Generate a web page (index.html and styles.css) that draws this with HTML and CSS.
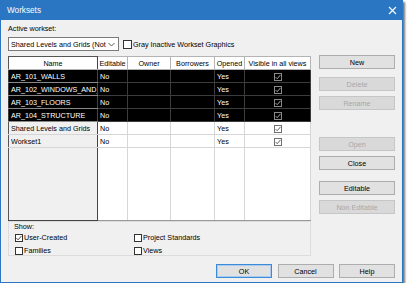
FILE: index.html
```html
<!DOCTYPE html>
<html>
<head>
<meta charset="utf-8">
<link rel="stylesheet" href="styles.css">
</head>
<body>
<div class="window">
  <div class="titlebar">
    <span class="title">Worksets</span>
    <svg class="close" width="9" height="9" viewBox="0 0 9 9"><path d="M1 1L8 8M8 1L1 8" stroke="#fff" stroke-width="1.1"/></svg>
  </div>
  <div class="body">
    <div class="label">Active workset:</div>
    <div class="toprow">
      <div class="select">
        <span class="select-text">Shared Levels and Grids (Not Editable)</span>
        <svg class="chev" width="7" height="5" viewBox="0 0 7 5"><path d="M0.5 1L3.5 4L6.5 1" fill="none" stroke="#444" stroke-width="0.9"/></svg>
      </div>
      <div class="check inline"><span class="box"></span><span>Gray Inactive Workset Graphics</span></div>
    </div>
    <div class="main">
      <div class="left">
        <table class="grid">
          <colgroup>
            <col class="c-name"><col class="c-edit"><col class="c-owner"><col class="c-borr"><col class="c-open"><col>
          </colgroup>
          <thead>
            <tr><th class="name">Name</th><th>Editable</th><th>Owner</th><th>Borrowers</th><th>Opened</th><th>Visible in all views</th></tr>
          </thead>
          <tbody>
            <tr class="sel"><td class="name"><span class="clip">AR_101_WALLS</span></td><td>No</td><td></td><td></td><td>Yes</td><td class="vis"><svg class="gchk" width="8" height="8" viewBox="0 0 8 8"><rect x="0.5" y="0.5" width="7" height="7" fill="none" stroke="#8a8a8a"/><path d="M1.6 4.1L3.2 5.7L6.5 1.9" fill="none" stroke="#b8b8b8" stroke-width="0.9"/></svg></td></tr>
            <tr class="sel"><td class="name"><span class="clip">AR_102_WINDOWS_AND_DOORS</span></td><td>No</td><td></td><td></td><td>Yes</td><td class="vis"><svg class="gchk" width="8" height="8" viewBox="0 0 8 8"><rect x="0.5" y="0.5" width="7" height="7" fill="none" stroke="#8a8a8a"/><path d="M1.6 4.1L3.2 5.7L6.5 1.9" fill="none" stroke="#b8b8b8" stroke-width="0.9"/></svg></td></tr>
            <tr class="sel"><td class="name"><span class="clip">AR_103_FLOORS</span></td><td>No</td><td></td><td></td><td>Yes</td><td class="vis"><svg class="gchk" width="8" height="8" viewBox="0 0 8 8"><rect x="0.5" y="0.5" width="7" height="7" fill="none" stroke="#8a8a8a"/><path d="M1.6 4.1L3.2 5.7L6.5 1.9" fill="none" stroke="#b8b8b8" stroke-width="0.9"/></svg></td></tr>
            <tr class="sel"><td class="name"><span class="clip">AR_104_STRUCTURE</span></td><td>No</td><td></td><td></td><td>Yes</td><td class="vis"><svg class="gchk" width="8" height="8" viewBox="0 0 8 8"><rect x="0.5" y="0.5" width="7" height="7" fill="none" stroke="#8a8a8a"/><path d="M1.6 4.1L3.2 5.7L6.5 1.9" fill="none" stroke="#b8b8b8" stroke-width="0.9"/></svg></td></tr>
            <tr><td class="name"><span class="clip">Shared Levels and Grids</span></td><td>No</td><td></td><td></td><td>Yes</td><td class="vis"><svg class="gchk" width="8" height="8" viewBox="0 0 8 8"><rect x="0.5" y="0.5" width="7" height="7" fill="#fff" stroke="#707070"/><path d="M1.6 4.1L3.2 5.7L6.5 1.9" fill="none" stroke="#505050" stroke-width="0.9"/></svg></td></tr>
            <tr><td class="name"><span class="clip">Workset1</span></td><td>No</td><td></td><td></td><td>Yes</td><td class="vis"><svg class="gchk" width="8" height="8" viewBox="0 0 8 8"><rect x="0.5" y="0.5" width="7" height="7" fill="#fff" stroke="#707070"/><path d="M1.6 4.1L3.2 5.7L6.5 1.9" fill="none" stroke="#505050" stroke-width="0.9"/></svg></td></tr>
            <tr class="filler"><td class="name"></td><td></td><td></td><td></td><td></td><td></td></tr>
          </tbody>
        </table>
      </div>
      <div class="side">
        <div class="btn">New</div>
        <div class="btn dis g8">Delete</div>
        <div class="btn dis g5">Rename</div>
        <div class="btn dis g27">Open</div>
        <div class="btn g5">Close</div>
        <div class="btn g11">Editable</div>
        <div class="btn dis g5">Non Editable</div>
      </div>
    </div>
    <div class="show">
      <div class="show-label">Show:</div>
      <div class="show-grid">
        <div class="check"><span class="box on"><svg width="8" height="8" viewBox="0 0 8 8"><path d="M1.4 4.1L3.1 5.8L6.6 1.8" fill="none" stroke="#333" stroke-width="0.9"/></svg></span><span>User-Created</span></div>
        <div class="check"><span class="box"></span><span>Project Standards</span></div>
        <div class="check"><span class="box"></span><span>Families</span></div>
        <div class="check"><span class="box"></span><span>Views</span></div>
      </div>
    </div>
    <div class="footer">
      <div class="btn def">OK</div>
      <div class="btn">Cancel</div>
      <div class="btn">Help</div>
    </div>
  </div>
</div>
</body>
</html>
```

FILE: styles.css
```css
html, body {
  margin: 0;
  padding: 0;
  background: #ffffff;
}

body {
  font-family: "Liberation Sans", Arial, sans-serif;
  font-size: 7.2px;
  color: #000;
}

.window {
  width: 401px;
  height: 282px;
  border: 1px solid #2a76c2;
  border-top: 0;
  background: #f0f0f0;
  box-shadow: 2px 2px 2px rgba(0, 0, 0, 0.55);
  display: flex;
  flex-direction: column;
}

.titlebar {
  height: 20px;
  background: #2a76c2;
  display: flex;
  align-items: center;
  justify-content: space-between;
  padding: 0 5px 0 6px;
}

.title {
  color: #fff;
  font-size: 8.2px;
}

.close {
  display: block;
}

.body {
  flex: 1;
  display: flex;
  flex-direction: column;
  padding: 0 7px 0 7px;
}

.label {
  margin-top: 4px;
  line-height: 10px;
  height: 10px;
}

.toprow {
  margin-top: 3px;
  height: 14px;
  display: flex;
  align-items: center;
}

.select {
  width: 111px;
  height: 14px;
  box-sizing: border-box;
  border: 1px solid #7a7a7a;
  background: #fff;
  display: flex;
  align-items: center;
  padding-left: 2px;
}

.select-text {
  width: 96px;
  overflow: hidden;
  white-space: nowrap;
}

.chev {
  margin-left: auto;
  margin-right: 3px;
}

.check {
  display: flex;
  align-items: center;
  gap: 1px;
  white-space: nowrap;
}

.check.inline {
  margin-left: 4px;
}

.box {
  width: 8px;
  height: 8px;
  box-sizing: border-box;
  border: 1px solid #333;
  background: #fff;
  display: block;
  position: relative;
}

.box svg {
  position: absolute;
  left: -1px;
  top: -1px;
}

.check.inline .box {
  width: 9px;
  height: 9px;
}

.main {
  margin-top: 4px;
  height: 159px;
  display: flex;
  gap: 8px;
}

.left {
  width: 303px;
  padding-top: 1px;
}

.grid {
  width: 303px;
  height: 156px;
  table-layout: fixed;
  border-collapse: collapse;
  border: 1px solid #9a9a9a;
}

.c-name { width: 89px; }
.c-edit { width: 30px; }
.c-owner { width: 43px; }
.c-borr { width: 44px; }
.c-open { width: 30px; }

.grid th,
.grid td {
  padding: 0 0 0 2px;
  height: 12px;
  line-height: 11px;
  border: 1px solid #d6d6d6;
  white-space: nowrap;
  overflow: hidden;
  text-overflow: clip;
  font-weight: normal;
  text-align: left;
  vertical-align: middle;
}

.clip {
  display: block;
  width: 86px;
  overflow: hidden;
  white-space: nowrap;
}

.grid th {
  background: #fff;
  text-align: center;
  padding: 0;
  border-color: #b4b4b4;
}

.grid td {
  background: #fff;
}

.grid .name {
  background: #f0f0f0;
  border-left: 1px solid #555;
  border-right: 1px solid #444;
}

.grid th.name {
  background: #fff;
  border-top: 1px solid #555;
}

.grid tr.sel td {
  background: #000;
  color: #fff;
  border-color: #3c3c3c;
}

.grid tr.sel td.name {
  border-bottom-color: #888;
  border-right-color: #444;
}

.grid td.vis {
  text-align: center;
  padding: 0;
}

.gchk {
  display: inline-block;
  vertical-align: middle;
}

.grid tr.filler td {
  height: 72px;
  border-bottom: 1px solid #9a9a9a;
}

.grid tr.filler td.name {
  border-bottom: 1px solid #444;
}

.side {
  width: 76px;
  display: flex;
  flex-direction: column;
}

.btn {
  height: 14px;
  box-sizing: border-box;
  border: 1px solid #adadad;
  background: #e1e1e1;
  display: flex;
  align-items: center;
  justify-content: center;
}

.btn.dis {
  background: #d9d9d9;
  border-color: #c6c6c6;
  color: #a8a8a8;
}

.g5 { margin-top: 5px; }
.g8 { margin-top: 8px; }
.g11 { margin-top: 11px; }
.g27 { margin-top: 27px; }

.show {
  margin-top: 7px;
  width: 303px;
  height: 35px;
  box-sizing: border-box;
  border: 1px solid #dcdcdc;
  padding: 0 0 0 5px;
}

.show-label {
  line-height: 9px;
  height: 9px;
}

.show-grid {
  display: grid;
  grid-template-columns: 119px auto;
  grid-auto-rows: 13px;
  align-items: center;
  padding-left: 1px;
}

.footer {
  margin-top: 8px;
  display: flex;
  justify-content: flex-end;
  gap: 5.5px;
}

.footer .btn {
  width: 56px;
}

.btn.def {
  border: 1px solid #3d8ad9;
  box-shadow: inset 0 0 0 1px #a9cbef;
}
```
